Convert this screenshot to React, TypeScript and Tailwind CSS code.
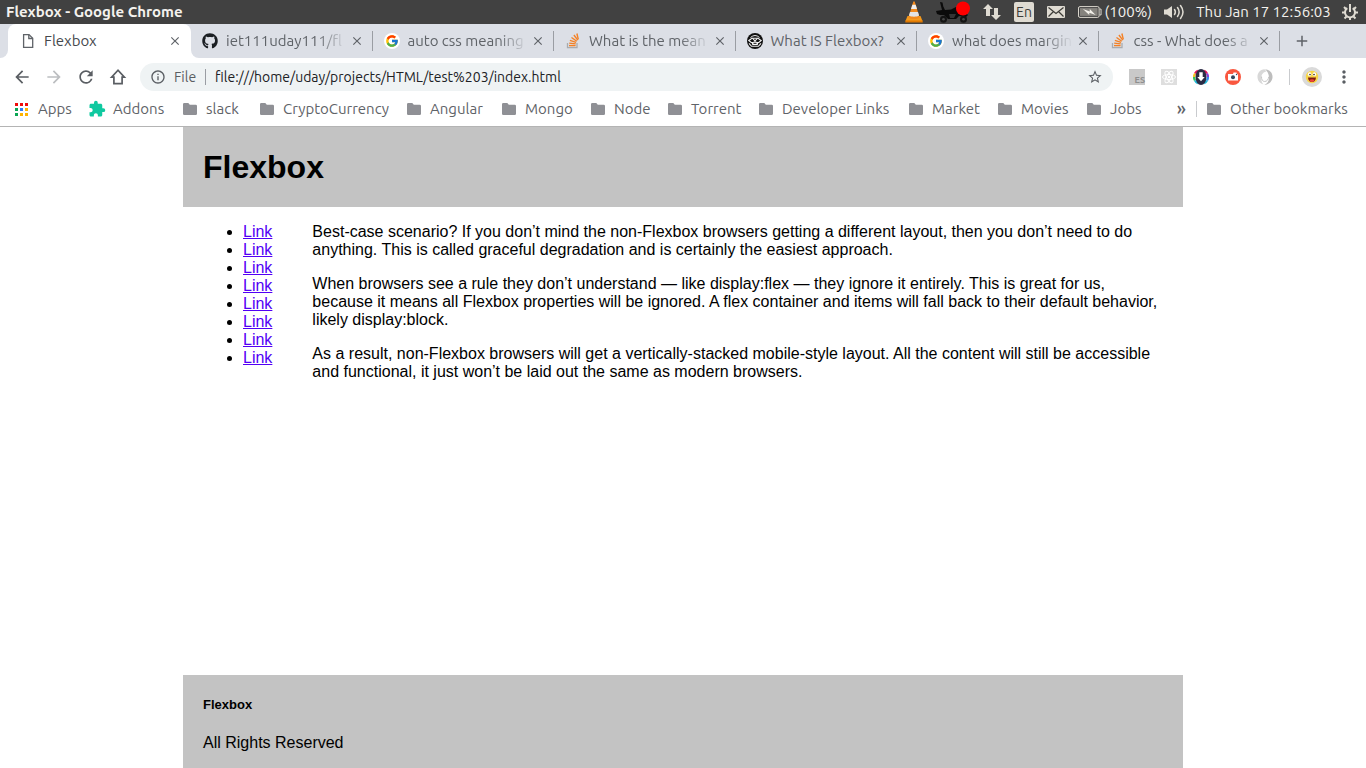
import type { ReactNode } from 'react';
import {
  MdAdd,
  MdArrowBack,
  MdArrowForward,
  MdClose,
  MdExtension,
  MdInfoOutline,
  MdMoreVert,
  MdRefresh,
  MdStarBorder,
} from 'react-icons/md';
import { FaGithub } from 'react-icons/fa';
import { FcGoogle } from 'react-icons/fc';

/* ---------- Drawings ---------- */

function VlcIcon() {
  return (
    <svg width="18" height="22" viewBox="0 0 18 22" aria-hidden="true">
      <path d="M2.500 15h13l2 5H.500z" fill="#f59a1c" />
      <path d="M.300 19.500h17.400v2H.300z" fill="#e07800" />
      <path d="M8.300.500h1.400l4.800 16c-1.800 2-9.200 2-11 0z" fill="#f28a1c" />
      <path d="M7.300 3.800h3.400l1.300 4.200H6z" fill="#eee" />
      <path d="M5 11h8l1.100 3.500c-2 1.600-8.200 1.600-10.200 0z" fill="#e4e4e4" />
    </svg>
  );
}

function BikeIcon() {
  return (
    <svg width="34" height="22" viewBox="0 0 34 22" aria-hidden="true">
      <path d="M4 1l2.500.5.8 4L9 9l6-.5L20 6l6 2 6 6-2 2-7-1-3 3h-8l-4-4H4l-3-1-1-3 6-1-1-4z" fill="#0b0b0b" />
      <path d="M13 13h7l-2 4h-4z" fill="#343434" />
      <circle cx="7.500" cy="18.300" r="3.500" fill="#141414" />
      <circle cx="27.500" cy="18.300" r="3.500" fill="#141414" />
      <circle cx="7.500" cy="18.300" r="1.300" fill="#484848" />
      <circle cx="27.500" cy="18.300" r="1.300" fill="#484848" />
      <circle cx="27" cy="7.500" r="7" fill="#f00" />
    </svg>
  );
}

function NetworkIcon() {
  return (
    <svg width="18" height="18" viewBox="0 0 18 18" fill="#dfdbd2" aria-hidden="true">
      <path d="M5 1l5 5H7v7H3V6H0z" />
      <path d="M13 17l-5-5h3V5h4v7h3z" />
    </svg>
  );
}

function MailIcon() {
  return (
    <svg width="18" height="12" viewBox="0 0 18 12" aria-hidden="true">
      <rect width="18" height="12" rx="1" fill="#dfdbd2" />
      <path d="M1.500 1.500L9 7.500l7.500-6M1.500 10.500l5-5M16.500 10.500l-5-5" fill="none" stroke="#3c3b37" strokeWidth="1.200" />
    </svg>
  );
}

function BatteryIcon() {
  return (
    <svg width="24" height="12" viewBox="0 0 24 12" aria-hidden="true">
      <rect x=".5" y=".5" width="21" height="11" rx="1.500" fill="none" stroke="#dfdbd2" />
      <rect x="2" y="2" width="18" height="8" fill="#85837e" />
      <path d="M22 3h1.500v6H22" fill="none" stroke="#dfdbd2" />
      <path d="M5 3l7 2.500V3l6 6-6.500-2.200V9z" fill="#f2f0ea" />
    </svg>
  );
}

function SpeakerIcon() {
  return (
    <svg width="21" height="16" viewBox="0 0 21 16" aria-hidden="true">
      <path d="M0 5.500h3L8 2v12l-5-3.500H0z" fill="#dfdbd2" />
      <g fill="none" stroke="#dfdbd2" strokeWidth="1.500" strokeLinecap="round">
        <path d="M10.500 5.500q1.800 2.500 0 5" />
        <path d="M13.500 3.500q3.300 4.500 0 9" />
        <path d="M16.500 1.500q5 6.500 0 13" />
      </g>
    </svg>
  );
}

function SessionIcon() {
  return (
    <svg width="16" height="16" viewBox="0 0 16 16" fill="none" stroke="#dfdbd2" aria-hidden="true">
      <path d="M5.300 4.200a5 5 0 1 0 5.400 0" strokeWidth="2" />
      <path d="M8 0v8" strokeWidth="2" />
      <path d="M2 3l2 2M14 3l-2 2M0 8.500h3M13 8.500h3M2.500 14.500l2-2M13.500 14.500l-2-2M8 13v3" strokeWidth="2" />
    </svg>
  );
}

function PageIcon() {
  return (
    <svg width="16" height="16" viewBox="0 0 16 16" fill="none" stroke="#5f6368" strokeWidth="1.300" aria-hidden="true">
      <path d="M3.600 1.600h5.400l3.700 3.700v9.100H3.600z" />
      <path d="M8.800 1.800v3.700h3.700" />
    </svg>
  );
}

function GoogleIcon() {
  return (
    <span className="flex size-4 items-center justify-center rounded-full bg-white">
      <FcGoogle className="size-3.5" />
    </span>
  );
}

function StackIcon() {
  return (
    <svg width="16" height="16" viewBox="0 0 16 16" fill="none" aria-hidden="true">
      <path d="M2.500 10v4.700h9.500V10" stroke="#a9abae" strokeWidth="1.300" />
      <g stroke="#f48024" strokeWidth="1.400">
        <path d="M4 12.600h6.600" />
        <path d="M4.200 10.100l6.500.8" />
        <path d="M4.900 7.400l6.200 1.900" />
        <path d="M6.500 4.500l5.300 3.700" />
        <path d="M8.900 2l3.900 5.100" />
        <path d="M11.900.5l1.400 5.800" />
      </g>
    </svg>
  );
}

function MaskIcon() {
  return (
    <svg width="16" height="16" viewBox="0 0 16 16" fill="none" aria-hidden="true">
      <circle cx="8" cy="8" r="8" fill="#111" />
      <path d="M3.500 4.500Q8 .5 12.500 4.500" stroke="#e8e8e8" strokeWidth="1" />
      <path d="M1.800 7.500L5 5.200h6l3.200 2.300-2.400 2H4.200z" stroke="#f4f4f4" strokeWidth="1.100" />
      <path d="M5.500 5.200L8 8l2.500-2.800" stroke="#f4f4f4" strokeWidth="1.100" />
      <path d="M4.500 9.500L8 8.300l3.500 1.200-.8 2.500H5.300z" fill="#f4f4f4" />
      <path d="M6.500 10.300h3" stroke="#111" />
      <path d="M2 10.300l2.500 3h7l2.500-3" stroke="#e8e8e8" strokeWidth="1.100" />
    </svg>
  );
}

function HomeIcon() {
  return (
    <svg width="18" height="18" viewBox="0 0 18 18" fill="none" stroke="#5a5e63" strokeWidth="1.700" aria-hidden="true">
      <path d="M9 2.200L2.600 9.200h2.300v6.500h8.200V9.200h2.300z" />
    </svg>
  );
}

function AppsIcon() {
  return (
    <svg width="13" height="13" viewBox="0 0 13 13" aria-hidden="true">
      <path d="M0 0h3v3H0zM5 0h3v3H5zM10 0h3v3h-3z" fill="#f00b0b" />
      <path d="M0 5h3v3H0zM0 10h3v3H0z" fill="#0aa653" />
      <path d="M5 5h3v3H5z" fill="#2f7cf6" />
      <path d="M10 5h3v3h-3zM5 10h3v3H5zM10 10h3v3h-3z" fill="#ffb300" />
    </svg>
  );
}

function FolderIcon() {
  return (
    <svg width="14" height="12" viewBox="0 0 14 12" aria-hidden="true">
      <path d="M1.300 0h4l1.500 1.700h5.900A1.300 1.300 0 0 1 14 3v7.700a1.300 1.300 0 0 1-1.300 1.300H1.300A1.300 1.300 0 0 1 0 10.700V1.300A1.300 1.300 0 0 1 1.300 0z" fill="#8f9095" />
    </svg>
  );
}

function AtomIcon() {
  return (
    <svg width="16" height="16" viewBox="0 0 16 16" fill="none" stroke="#fff" aria-hidden="true">
      <rect width="16" height="16" fill="#dedede" stroke="none" />
      <ellipse cx="8" cy="8" rx="6.500" ry="2.500" />
      <ellipse cx="8" cy="8" rx="6.500" ry="2.500" transform="rotate(60 8 8)" />
      <ellipse cx="8" cy="8" rx="6.500" ry="2.500" transform="rotate(120 8 8)" />
      <circle cx="8" cy="8" r="1.200" fill="#fff" stroke="none" />
    </svg>
  );
}

function DownloadIcon() {
  return (
    <svg width="16" height="16" viewBox="0 0 16 16" aria-hidden="true">
      <g fill="none" strokeWidth="2.200">
        <path d="M2 4.500A7 7 0 0 1 5 1.700" stroke="#e6175c" />
        <path d="M11 1.700A7 7 0 0 1 14 4.500" stroke="#e6175c" />
        <path d="M1 8A7 7 0 0 1 2 4.500" stroke="#f6c21c" />
        <path d="M14 4.500A7 7 0 0 1 15 8" stroke="#8b3ad6" />
        <path d="M2 11.500A7 7 0 0 1 1 8" stroke="#35c759" />
        <path d="M15 8a7 7 0 0 1-1 3.500" stroke="#2d8cf0" />
        <path d="M5 14.300A7 7 0 0 1 2 11.500M14 11.500a7 7 0 0 1-3 2.800" stroke="#24b8d8" />
      </g>
      <ellipse cx="8" cy="8" rx="5.500" ry="8" fill="#2a2b45" />
      <path d="M6.300 3.300h3.400V8h2L8 12.300 4.300 8h2z" fill="#fff" />
    </svg>
  );
}

function CameraIcon() {
  return (
    <svg width="16" height="16" viewBox="0 0 16 16" aria-hidden="true">
      <circle cx="8" cy="8" r="8" fill="#f9573f" />
      <path d="M3 5h5l.5-1.500h3L12 5h1v6.500H3z" fill="#fff" />
      <circle cx="8" cy="8.300" r="2" fill="#34495e" />
      <circle cx="11.600" cy="5.500" r=".8" fill="#34495e" />
    </svg>
  );
}

function RingIcon() {
  return (
    <svg width="16" height="16" viewBox="0 0 16 16" aria-hidden="true">
      <path d="M7.500.3C3 .8.300 4 .500 8.300c.2 3.800 2.800 6.500 6 7.200-1.200-1.200-2.300-3.500-2.300-6.300C4.200 5.500 6.300 3 9.500 2.500z" fill="#d8d8d8" />
      <path d="M8 .2c5.200.2 7.800 4.300 7.500 8.300-.3 4-3.800 7.200-8.200 7.200 3-1 4.800-3.600 4.700-7.200C11.900 5.300 10.800 2.200 8 .2z" fill="#bdbdbd" />
      <path d="M4.500 7.500c-.2 3.200 1.200 5 3.200 5 2.200 0 3.800-2 4-4.700" fill="none" stroke="#c6c6c6" />
    </svg>
  );
}

function AvatarIcon() {
  return (
    <svg width="20" height="20" viewBox="0 0 20 20" aria-hidden="true">
      <circle cx="10" cy="10" r="10" fill="#dadada" />
      <circle cx="10" cy="10" r="6.200" fill="#f7d648" />
      <ellipse cx="7.600" cy="7.300" rx="1.700" ry="2" fill="#fff" />
      <ellipse cx="12.400" cy="7.300" rx="1.700" ry="2" fill="#fff" />
      <circle cx="8" cy="7.600" r=".8" fill="#3b2a10" />
      <circle cx="12" cy="7.600" r=".8" fill="#3b2a10" />
      <path d="M6 10.500h8c-.3 3-1.800 4.500-4 4.500s-3.700-1.500-4-4.500z" fill="#7c1a10" />
      <path d="M7.300 13q2.700-1.600 5.400 0-1 2-2.700 2t-2.700-2z" fill="#ef4438" />
    </svg>
  );
}

/* ---------- Data ---------- */

const tabs: { title: string; icon: ReactNode }[] = [
  { title: 'iet111uday111/fl', icon: <FaGithub className="size-4 text-[#1b1f23]" /> },
  { title: 'auto css meaning', icon: <GoogleIcon /> },
  { title: 'What is the mean', icon: <StackIcon /> },
  { title: 'What IS Flexbox?', icon: <MaskIcon /> },
  { title: 'what does margin', icon: <GoogleIcon /> },
  { title: 'css - What does a', icon: <StackIcon /> },
];

const folders = [
  { name: 'slack', width: 'w-[77px]' },
  { name: 'CryptoCurrency', width: 'w-[147px]' },
  { name: 'Angular', width: 'w-[95px]' },
  { name: 'Mongo', width: 'w-[89px]' },
  { name: 'Node', width: 'w-[77px]' },
  { name: 'Torrent', width: 'w-[91px]' },
  { name: 'Developer Links', width: 'w-[150px]' },
  { name: 'Market', width: 'w-[89px]' },
  { name: 'Movies', width: 'w-[89px]' },
  { name: 'Jobs', width: 'w-[60px]' },
];

const paragraphs = [
  'Best-case scenario? If you don’t mind the non-Flexbox browsers getting a different layout, then you don’t need to do anything. This is called graceful degradation and is certainly the easiest approach.',
  'When browsers see a rule they don’t understand — like display:flex — they ignore it entirely. This is great for us, because it means all Flexbox properties will be ignored. A flex container and items will fall back to their default behavior, likely display:block.',
  'As a result, non-Flexbox browsers will get a vertically-stacked mobile-style layout. All the content will still be accessible and functional, it just won’t be laid out the same as modern browsers.',
];

/* ---------- Desktop and browser bars ---------- */

function SystemBar() {
  return (
    <div className="flex h-6 shrink-0 items-center justify-between bg-[#414141] pr-2 pl-1.5 text-[15px] whitespace-nowrap text-[#f4f2ee]">
      <span className="font-bold">Flexbox - Google Chrome</span>
      <div className="flex items-center gap-3">
        <div className="flex items-center gap-[13px]">
          <VlcIcon />
          <BikeIcon />
          <NetworkIcon />
          <span className="flex size-5 items-center justify-center rounded-xs bg-[#dfdbd2] text-sm text-[#3c3b37]">En</span>
          <MailIcon />
          <div className="flex w-[74px] items-center gap-[3px]">
            <BatteryIcon />
            <span>(100%)</span>
          </div>
        </div>
        <SpeakerIcon />
        <time className="flex w-[133px] justify-center">Thu Jan 17 12:56:03</time>
        <SessionIcon />
      </div>
    </div>
  );
}

function TabStrip() {
  return (
    <div className="flex h-[34px] shrink-0 bg-white text-[15px] text-[#5f6368]">
      <div className="w-2 rounded-br-lg bg-[#dcdfe6]" />
      <div className="w-[183px] bg-linear-to-b from-[#dcdfe6] from-50% to-white to-50%">
        <div className="flex h-full items-center rounded-t-lg bg-white pr-2 pl-3">
          <PageIcon />
          <button className="ml-2 flex-1 text-left text-[#45494d]">Flexbox</button>
          <button aria-label="Close tab" className="flex size-4 items-center justify-center">
            <MdClose className="size-3.5" />
          </button>
        </div>
      </div>
      <div className="flex flex-1 items-center rounded-bl-lg bg-[#dcdfe6]">
        <div className="flex max-w-[1089px] flex-1">
          {tabs.map((tab) => (
            <div key={tab.title} className="flex h-5 flex-1 items-center border-r border-[#9a9da3] pr-[7px] pl-[11px]">
              <span className="shrink-0">{tab.icon}</span>
              <button
                className={
                  tab.title.endsWith('?')
                    ? 'ml-2 flex-1 text-left whitespace-nowrap'
                    : 'ml-2 w-0 flex-1 overflow-hidden mask-r-from-75% text-left whitespace-nowrap'
                }
              >
                {tab.title}
              </button>
              <button aria-label="Close tab" className="ml-0.5 flex size-4 items-center justify-center">
                <MdClose className="size-3.5" />
              </button>
            </div>
          ))}
        </div>
        <button aria-label="New tab" className="ml-3 flex size-5 items-center justify-center">
          <MdAdd className="size-[18px]" />
        </button>
      </div>
    </div>
  );
}

function Toolbar() {
  return (
    <div className="flex h-[38px] shrink-0 items-center bg-white px-3 text-sm text-[#5a5e63]">
      <div className="flex items-center gap-3">
        <button aria-label="Back" className="flex size-5 items-center justify-center"><MdArrowBack className="size-5" /></button>
        <button aria-label="Forward" className="flex size-5 items-center justify-center text-[#bcbec1]"><MdArrowForward className="size-5" /></button>
        <button aria-label="Reload" className="flex size-5 items-center justify-center"><MdRefresh className="size-5" /></button>
        <button aria-label="Home" className="flex size-5 items-center justify-center"><HomeIcon /></button>
      </div>
      <div className="ml-3 flex h-7 flex-1 items-center rounded-full bg-[#eff3f4] px-2.5">
        <MdInfoOutline className="size-4" />
        <label htmlFor="address" className="ml-2 w-[31px]">File</label>
        <input
          id="address"
          className="w-0 flex-1 border-l border-[#9a9da3] pl-[9px] text-sm leading-4 text-[#202124] outline-none"
          defaultValue="file:///home/uday/projects/HTML/test%203/index.html"
        />
        <button aria-label="Bookmark this page"><MdStarBorder className="size-4" /></button>
      </div>
      <div className="ml-4 flex items-center gap-4">
        <button aria-label="ES" className="flex size-4 items-end justify-end bg-[#c9c9c9] text-[9px] leading-[10px] font-bold text-[#8f8f8f]">ES</button>
        <button aria-label="React tools"><AtomIcon /></button>
        <button aria-label="Downloader"><DownloadIcon /></button>
        <button aria-label="Screenshot"><CameraIcon /></button>
        <button aria-label="JSON viewer"><RingIcon /></button>
      </div>
      <div className="ml-4 h-4 border-l border-[#c9cbce]" />
      <button aria-label="Profile" className="ml-3"><AvatarIcon /></button>
      <button aria-label="Menu" className="ml-3"><MdMoreVert className="size-5" /></button>
    </div>
  );
}

function BookmarksBar() {
  return (
    <nav aria-label="Bookmarks" className="flex h-[31px] shrink-0 items-center border-b border-[#b4b4b4] bg-white pr-[15px] pb-1 pl-[15px] text-[15px] whitespace-nowrap text-[#5f6368]">
      <button className="flex w-[73px] items-center gap-2.5"><AppsIcon />Apps</button>
      <button className="flex w-[95px] items-center gap-[7px]"><MdExtension className="size-[18px] text-[#0fc9a0]" />Addons</button>
      {folders.map((folder) => (
        <button key={folder.name} className={`flex items-center gap-[9px] ${folder.width}`}>
          <FolderIcon />
          {folder.name}
        </button>
      ))}
      <button aria-label="More bookmarks" className="ml-auto pb-0.5 text-lg leading-4 font-medium">»</button>
      <div className="ml-2.5 h-4 border-l border-[#c9cbce]" />
      <button className="ml-2.5 flex w-36 items-center gap-[9px]"><FolderIcon />Other bookmarks</button>
    </nav>
  );
}

/* ---------- Page ---------- */

function Page() {
  return (
    <div className="mx-auto flex min-h-0 w-full max-w-[1000px] flex-1 flex-col font-['Liberation_Sans',Arial,sans-serif] text-base leading-[18px] text-black">
      <header className="bg-[#c3c3c3] px-5 py-5">
        <h1 className="text-[32px] leading-10 font-bold">Flexbox</h1>
      </header>
      <div className="flex flex-1 gap-10 px-5 pt-4">
        <ul className="list-disc pl-10">
          {Array.from({ length: 8 }, (_, i) => (
            <li key={i}>
              <a href="#" className="text-[#5200f5] underline">Link</a>
            </li>
          ))}
        </ul>
        <main className="flex flex-1 flex-col gap-4">
          {paragraphs.map((text) => (
            <p key={text}>{text}</p>
          ))}
        </main>
      </div>
      <footer className="bg-[#c3c3c3] px-5 pt-[22px] pb-4">
        <h5 className="text-[13px] leading-4 font-bold">Flexbox</h5>
        <p className="mt-[21px]">All Rights Reserved</p>
      </footer>
    </div>
  );
}

export default function App() {
  return (
    <div className="flex h-screen flex-col overflow-hidden bg-white font-['Ubuntu','Noto_Sans',sans-serif]">
      <SystemBar />
      <TabStrip />
      <Toolbar />
      <BookmarksBar />
      <Page />
    </div>
  );
}
